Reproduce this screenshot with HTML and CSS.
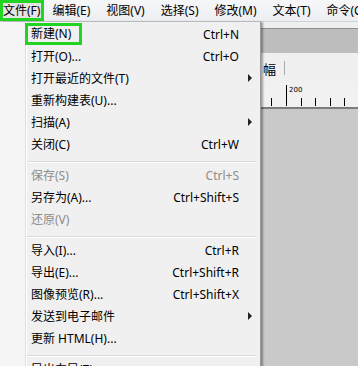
FILE: index.html
```html
<!DOCTYPE html>
<html lang="zh-CN">
<head>
  <meta charset="UTF-8">
  <title>文件菜单</title>
  <link rel="stylesheet" href="styles.css">
</head>
<body>
  <div class="menubar">
    <span class="menu-title is-open">文件(F)</span>
    <span class="menu-title">编辑(E)</span>
    <span class="menu-title">视图(V)</span>
    <span class="menu-title">选择(S)</span>
    <span class="menu-title">修改(M)</span>
    <span class="menu-title">文本(T)</span>
    <span class="menu-title">命令(C)</span>
  </div>

  <div class="workspace">
    <div class="doc-strip"></div>
    <div class="doc-band"></div>
    <div class="doc-toolbar">
      <span class="tb-label">幅</span>
      <span class="tb-sep"></span>
    </div>
    <div class="ruler">
      <svg width="358" height="24" viewBox="0 0 358 24">
        <line x1="286.5" y1="2" x2="286.5" y2="23" stroke="#000" />
        <text x="289" y="9" font-size="7" font-family="DejaVu Sans, sans-serif">200</text>
        <line x1="271.5" y1="15" x2="271.5" y2="23" stroke="#000" />
        <line x1="301.5" y1="15" x2="301.5" y2="23" stroke="#000" />
        <line x1="315.5" y1="15" x2="315.5" y2="23" stroke="#000" />
        <line x1="330.5" y1="15" x2="330.5" y2="23" stroke="#000" />
        <line x1="344.5" y1="15" x2="344.5" y2="23" stroke="#000" />
      </svg>
    </div>
    <div class="canvas"></div>

    <!-- 文件菜单 -->
    <div class="dropdown">
      <div class="item"><span class="label is-marked">新建(N)</span><span class="key">Ctrl+N</span><span></span></div>
      <div class="item"><span class="label">打开(O)...</span><span class="key">Ctrl+O</span><span></span></div>
      <div class="item"><span class="label">打开最近的文件(T)</span><span class="key"></span><span class="arrow"></span></div>
      <div class="item"><span class="label">重新构建表(U)...</span><span class="key"></span><span></span></div>
      <div class="item"><span class="label">扫描(A)</span><span class="key"></span><span class="arrow"></span></div>
      <div class="item"><span class="label">关闭(C)</span><span class="key">Ctrl+W</span><span></span></div>
      <div class="sep"></div>
      <div class="item disabled"><span class="label">保存(S)</span><span class="key">Ctrl+S</span><span></span></div>
      <div class="item"><span class="label">另存为(A)...</span><span class="key">Ctrl+Shift+S</span><span></span></div>
      <div class="item disabled"><span class="label">还原(V)</span><span class="key"></span><span></span></div>
      <div class="sep"></div>
      <div class="item"><span class="label">导入(I)...</span><span class="key">Ctrl+R</span><span></span></div>
      <div class="item"><span class="label">导出(E)...</span><span class="key">Ctrl+Shift+R</span><span></span></div>
      <div class="item"><span class="label">图像预览(R)...</span><span class="key">Ctrl+Shift+X</span><span></span></div>
      <div class="item"><span class="label">发送到电子邮件</span><span class="key"></span><span class="arrow"></span></div>
      <div class="item"><span class="label">更新 HTML(H)...</span><span class="key"></span><span></span></div>
      <div class="sep"></div>
      <div class="item"><span class="label">导出向导(Z)...</span><span class="key"></span><span></span></div>
    </div>
  </div>
</body>
</html>
```

FILE: styles.css
```css
/* 基本样式 */
body {
  margin: 0;
  width: 358px;
  height: 366px;
  overflow: hidden;
  background-color: #c9c9c9;
  font-family: "Noto Sans", "Noto Sans CJK SC", sans-serif;
  font-size: 12px;
  color: #000;
}

/* 菜单栏 */
.menubar {
  display: flex;
  height: 21px;
  border-bottom: 1px solid #cfd2d6;
  background: linear-gradient(#f6f7f9, #eceef1);
  white-space: nowrap;
}
.menu-title {
  padding: 0 8px;
  line-height: 21px;
}
.menu-title.is-open {
  padding: 0 1px 0 0;
  line-height: 16px;
  border: 3px solid #22d422;
  background-color: #e4e4e4;
}

/* 文档区域 */
.workspace {
  position: relative;
}
.doc-strip {
  height: 6px;
  background-color: #eeeff1;
  border-bottom: 1px solid #8e8e8e;
}
.doc-band {
  height: 24px;
  background-color: #bdbdbd;
}
.doc-toolbar {
  display: flex;
  align-items: center;
  height: 30px;
  padding-left: 263px;
  background-color: #f0f0f0;
}
.tb-label {
  font-size: 13px;
}
.tb-sep {
  width: 1px;
  height: 14px;
  margin-left: 8px;
  background-color: #a8a8a8;
}
.ruler {
  height: 24px;
  background-color: #f1f1f1;
  border-bottom: 2px solid #7c7c7c;
}
.ruler svg {
  display: block;
}
.canvas {
  height: 240px;
}

/* 下拉菜单 */
.dropdown {
  position: absolute;
  top: 0;
  left: 0;
  width: 260px;
  height: 360px;
  padding-top: 1px;
  border-right: 1px solid #9a9a9a;
  box-shadow: 2px 0 2px rgba(0, 0, 0, 0.35);
  background: linear-gradient(to right, #f5f5f5 25px, #dedede 25px, #dedede 26px, #fff 26px, #fff 27px, #f0f0f0 27px);
}
.item {
  display: grid;
  grid-template-columns: 1fr auto 21px;
  align-items: center;
  height: 22px;
  padding-left: 31px;
  white-space: nowrap;
}
.item.disabled {
  color: #8d8d8d;
}
.label {
  justify-self: start;
}
.label.is-marked {
  margin-left: -6px;
  padding: 0 8px 0 3px;
  line-height: 16px;
  border: 3px solid #22d422;
}
.key {
  text-align: right;
}
.arrow {
  justify-self: center;
  width: 0;
  height: 0;
  border-top: 4px solid transparent;
  border-bottom: 4px solid transparent;
  border-left: 4px solid #222;
}
.sep {
  height: 9px;
  margin-left: 27px;
  margin-right: 3px;
  background: linear-gradient(transparent 6px, #d9d9d9 6px, #d9d9d9 7px, #fff 7px, #fff 8px, transparent 8px);
}
```
